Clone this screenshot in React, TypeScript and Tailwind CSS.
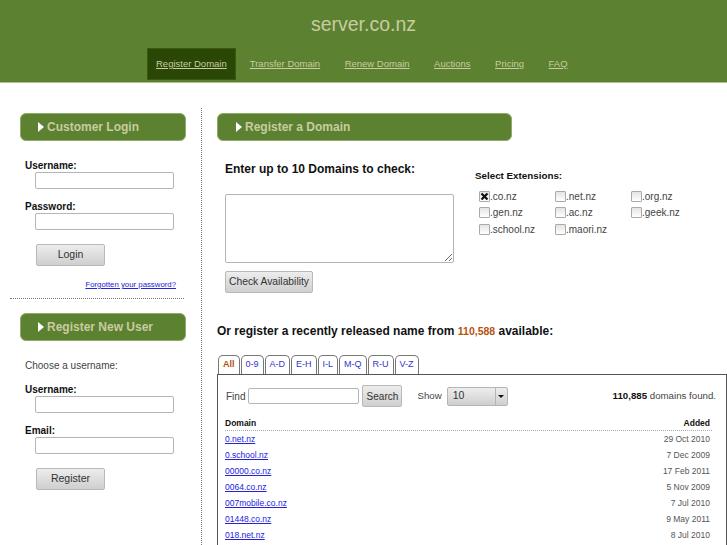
const navItems = ["Register Domain", "Transfer Domain", "Renew Domain", "Auctions", "Pricing", "FAQ"];
const tabs = ["All", "0-9", "A-D", "E-H", "I-L", "M-Q", "R-U", "V-Z"];
const extensions = [".co.nz", ".net.nz", ".org.nz", ".gen.nz", ".ac.nz", ".geek.nz", ".school.nz", ".maori.nz"];
const domains = [
  ["0.net.nz", "29 Oct 2010"],
  ["0.school.nz", "7 Dec 2009"],
  ["00000.co.nz", "17 Feb 2011"],
  ["0064.co.nz", "5 Nov 2009"],
  ["007mobile.co.nz", "7 Jul 2010"],
  ["01448.co.nz", "9 May 2011"],
  ["018.net.nz", "8 Jul 2010"],
];

function SectionBar({ title, className }: { title: string; className: string }) {
  return (
    <div className={`flex h-[28px] items-center rounded-[6px] border border-[#8fab68] bg-[#5c8130] text-[12px] font-bold text-[#c8cca0] ${className}`}>
      <svg className="mr-[3px] h-[10px] w-[6px]" viewBox="0 0 6 10">
        <path d="M0 0 L6 5 L0 10 Z" fill="#fff" />
      </svg>
      {title}
    </div>
  );
}

function Field({ label, className }: { label: string; className: string }) {
  return (
    <div className={className}>
      <div className="h-[12px] text-[10px] leading-[12px] font-bold text-[#111]">{label}</div>
      <input className="ml-[10px] block h-[17px] w-[139px] rounded-[2px] border border-[#b5b5b5] bg-white" type="text" />
    </div>
  );
}

function GreyButton({ label, className }: { label: string; className: string }) {
  return (
    <button className={`rounded-[2px] border border-[#b9b9b9] bg-gradient-to-b from-[#ededed] to-[#cfcfcf] text-[#333] ${className}`} type="button">
      {label}
    </button>
  );
}

function Extension({ label, checked }: { label: string; checked: boolean }) {
  return (
    <div className="flex h-[16.5px] items-center text-[10px] text-[#444]">
      <span className="flex h-[11px] w-[11px] items-center justify-center rounded-[1px] border border-[#aaa] bg-gradient-to-b from-[#e4e4e4] to-white">
        {checked && (
          <svg className="h-[9px] w-[9px]" viewBox="0 0 9 9">
            <path d="M1.5 1.5 L7.5 7.5 M7.5 1.5 L1.5 7.5" stroke="#111" strokeWidth="2.2" />
          </svg>
        )}
      </span>
      {label}
    </div>
  );
}

export default function App() {
  return (
    <div className="h-[545px] w-[727px] overflow-hidden bg-white font-['Liberation_Sans',Arial,sans-serif]">
      <header className="h-[83px] border-b border-[#a9c08a] bg-[#5c8130]">
        <h1 className="pt-[12px] text-center text-[19.5px] leading-[24px] font-normal text-[#c8cca0]">server.co.nz</h1>
        <nav className="mt-[12px] flex pl-[147px] text-[9.5px]">
          {navItems.map((item, i) => (
            <a
              key={item}
              className={`flex h-[32px] items-center underline ${i === 0 ? "mr-[14px] border border-[#3a5a12] bg-[#2a4706] px-[8px]" : "mr-[24.5px]"} text-[#c8cca0]`}
              href="#"
            >
              {item}
            </a>
          ))}
        </nav>
      </header>

      <div className="mt-[25px] flex">
        <aside className="h-[437px] w-[202px] shrink-0 border-r border-dotted border-[#777] pt-[5px]">
          <SectionBar className="ml-[20px] w-[166px] pl-[17px]" title="Customer Login" />
          <div className="pl-[25px]">
            <Field className="mt-[19px]" label="Username:" />
            <Field className="mt-[12px]" label="Password:" />
            <GreyButton className="mt-[14px] ml-[11px] block h-[22px] w-[69px] text-[10.5px]" label="Login" />
          </div>
          <div className="mt-[4px] pr-[25px] text-right">
            <a className="text-[7.8px] text-[#2222dd] underline" href="#">Forgotten your password?</a>
          </div>
          <div className="mt-[4px] ml-[10px] w-[174px] border-t border-dotted border-[#777]" />
          <SectionBar className="mt-[14px] ml-[20px] w-[166px] pl-[17px]" title="Register New User" />
          <div className="pl-[25px]">
            <p className="mt-[18px] text-[10px] leading-[13px] text-[#444]">Choose a username:</p>
            <Field className="mt-[12px]" label="Username:" />
            <Field className="mt-[12px]" label="Email:" />
            <GreyButton className="mt-[14px] ml-[11px] block h-[22px] w-[69px] text-[10.5px]" label="Register" />
          </div>
        </aside>

        <main className="min-w-0 flex-1 pt-[5px] pl-[15px]">
          <SectionBar className="w-[295px] pl-[18px]" title="Register a Domain" />
          <div className="flex">
            <div className="pl-[8px]">
              <h2 className="mt-[21px] text-[12px] leading-[15px] font-bold text-[#111]">Enter up to 10 Domains to check:</h2>
              <textarea className="mt-[17px] block h-[69px] w-[229px] rounded-[2px] border border-[#b5b5b5] bg-white" />
              <GreyButton className="mt-[8px] block h-[22px] w-[88px] text-[10.3px]" label="Check Availability" />
            </div>
            <div className="ml-[21px]">
              <h3 className="mt-[29px] text-[9.8px] leading-[12px] font-bold text-[#111]">Select Extensions:</h3>
              <div className="mt-[6px] ml-[4px] grid grid-cols-[76px_76px_76px]">
                {extensions.map((ext, i) => (
                  <Extension key={ext} checked={i === 0} label={ext} />
                ))}
              </div>
            </div>
          </div>

          <h2 className="mt-[31px] text-[12px] leading-[15px] font-bold text-[#111]">
            Or register a recently released name from <span className="text-[10.5px] text-[#b5530f]">110,588</span> available:
          </h2>

          <div className="mt-[16px] flex pl-[1px]">
            {tabs.map((tab, i) => (
              <a
                key={tab}
                className={`mr-[1px] flex h-[19px] items-center rounded-t-[5px] border border-b-0 border-[#777] px-[4px] text-[9px] ${i === 0 ? "font-bold text-[#b5530f]" : "text-[#3333cc]"}`}
                href="#"
              >
                {tab}
              </a>
            ))}
          </div>
          <section className="h-[200px] w-[510px] border-x border-t border-[#555] pt-[10px] pr-[10px] pl-[7px]">
            <div className="flex h-[22px] items-center text-[10px] text-[#444]">
              <span className="mr-[3px] ml-[1px]">Find</span>
              <input className="h-[16px] w-[111px] rounded-[2px] border border-[#b5b5b5] bg-white" type="text" />
              <GreyButton className="ml-[3px] h-[22px] w-[40px] text-[10px]" label="Search" />
              <span className="ml-[15px] text-[9.7px]">Show</span>
              <div className="ml-[5px] flex h-[19px] w-[61px] items-center justify-between rounded-[2px] border border-[#b5b5b5] bg-gradient-to-b from-[#ededed] to-[#cfcfcf]">
                <span className="pl-[5px] text-[10.5px] text-[#333]">10</span>
                <span className="flex h-full w-[12px] items-center justify-center border-l border-[#b5b5b5]">
                  <svg className="h-[3px] w-[6px]" viewBox="0 0 6 3"><path d="M0 0 H6 L3 3 Z" fill="#111" /></svg>
                </span>
              </div>
              <span className="ml-auto text-[9.7px]"><b className="text-[#111]">110,885</b> domains found.</span>
            </div>
            <div className="mt-[9px] flex h-[15px] w-[487px] items-center justify-between border-b border-dotted border-[#aaa] text-[8.5px] font-bold text-[#111]">
              <span>Domain</span>
              <span className="pr-[2px]">Added</span>
            </div>
            {domains.map(([name, added]) => (
              <div key={name} className="flex h-[16px] w-[487px] items-center justify-between">
                <a className="text-[8.5px] text-[#2222dd] underline" href="#">{name}</a>
                <span className="pr-[2px] text-[8.5px] text-[#555]">{added}</span>
              </div>
            ))}
          </section>
        </main>
      </div>
    </div>
  );
}
